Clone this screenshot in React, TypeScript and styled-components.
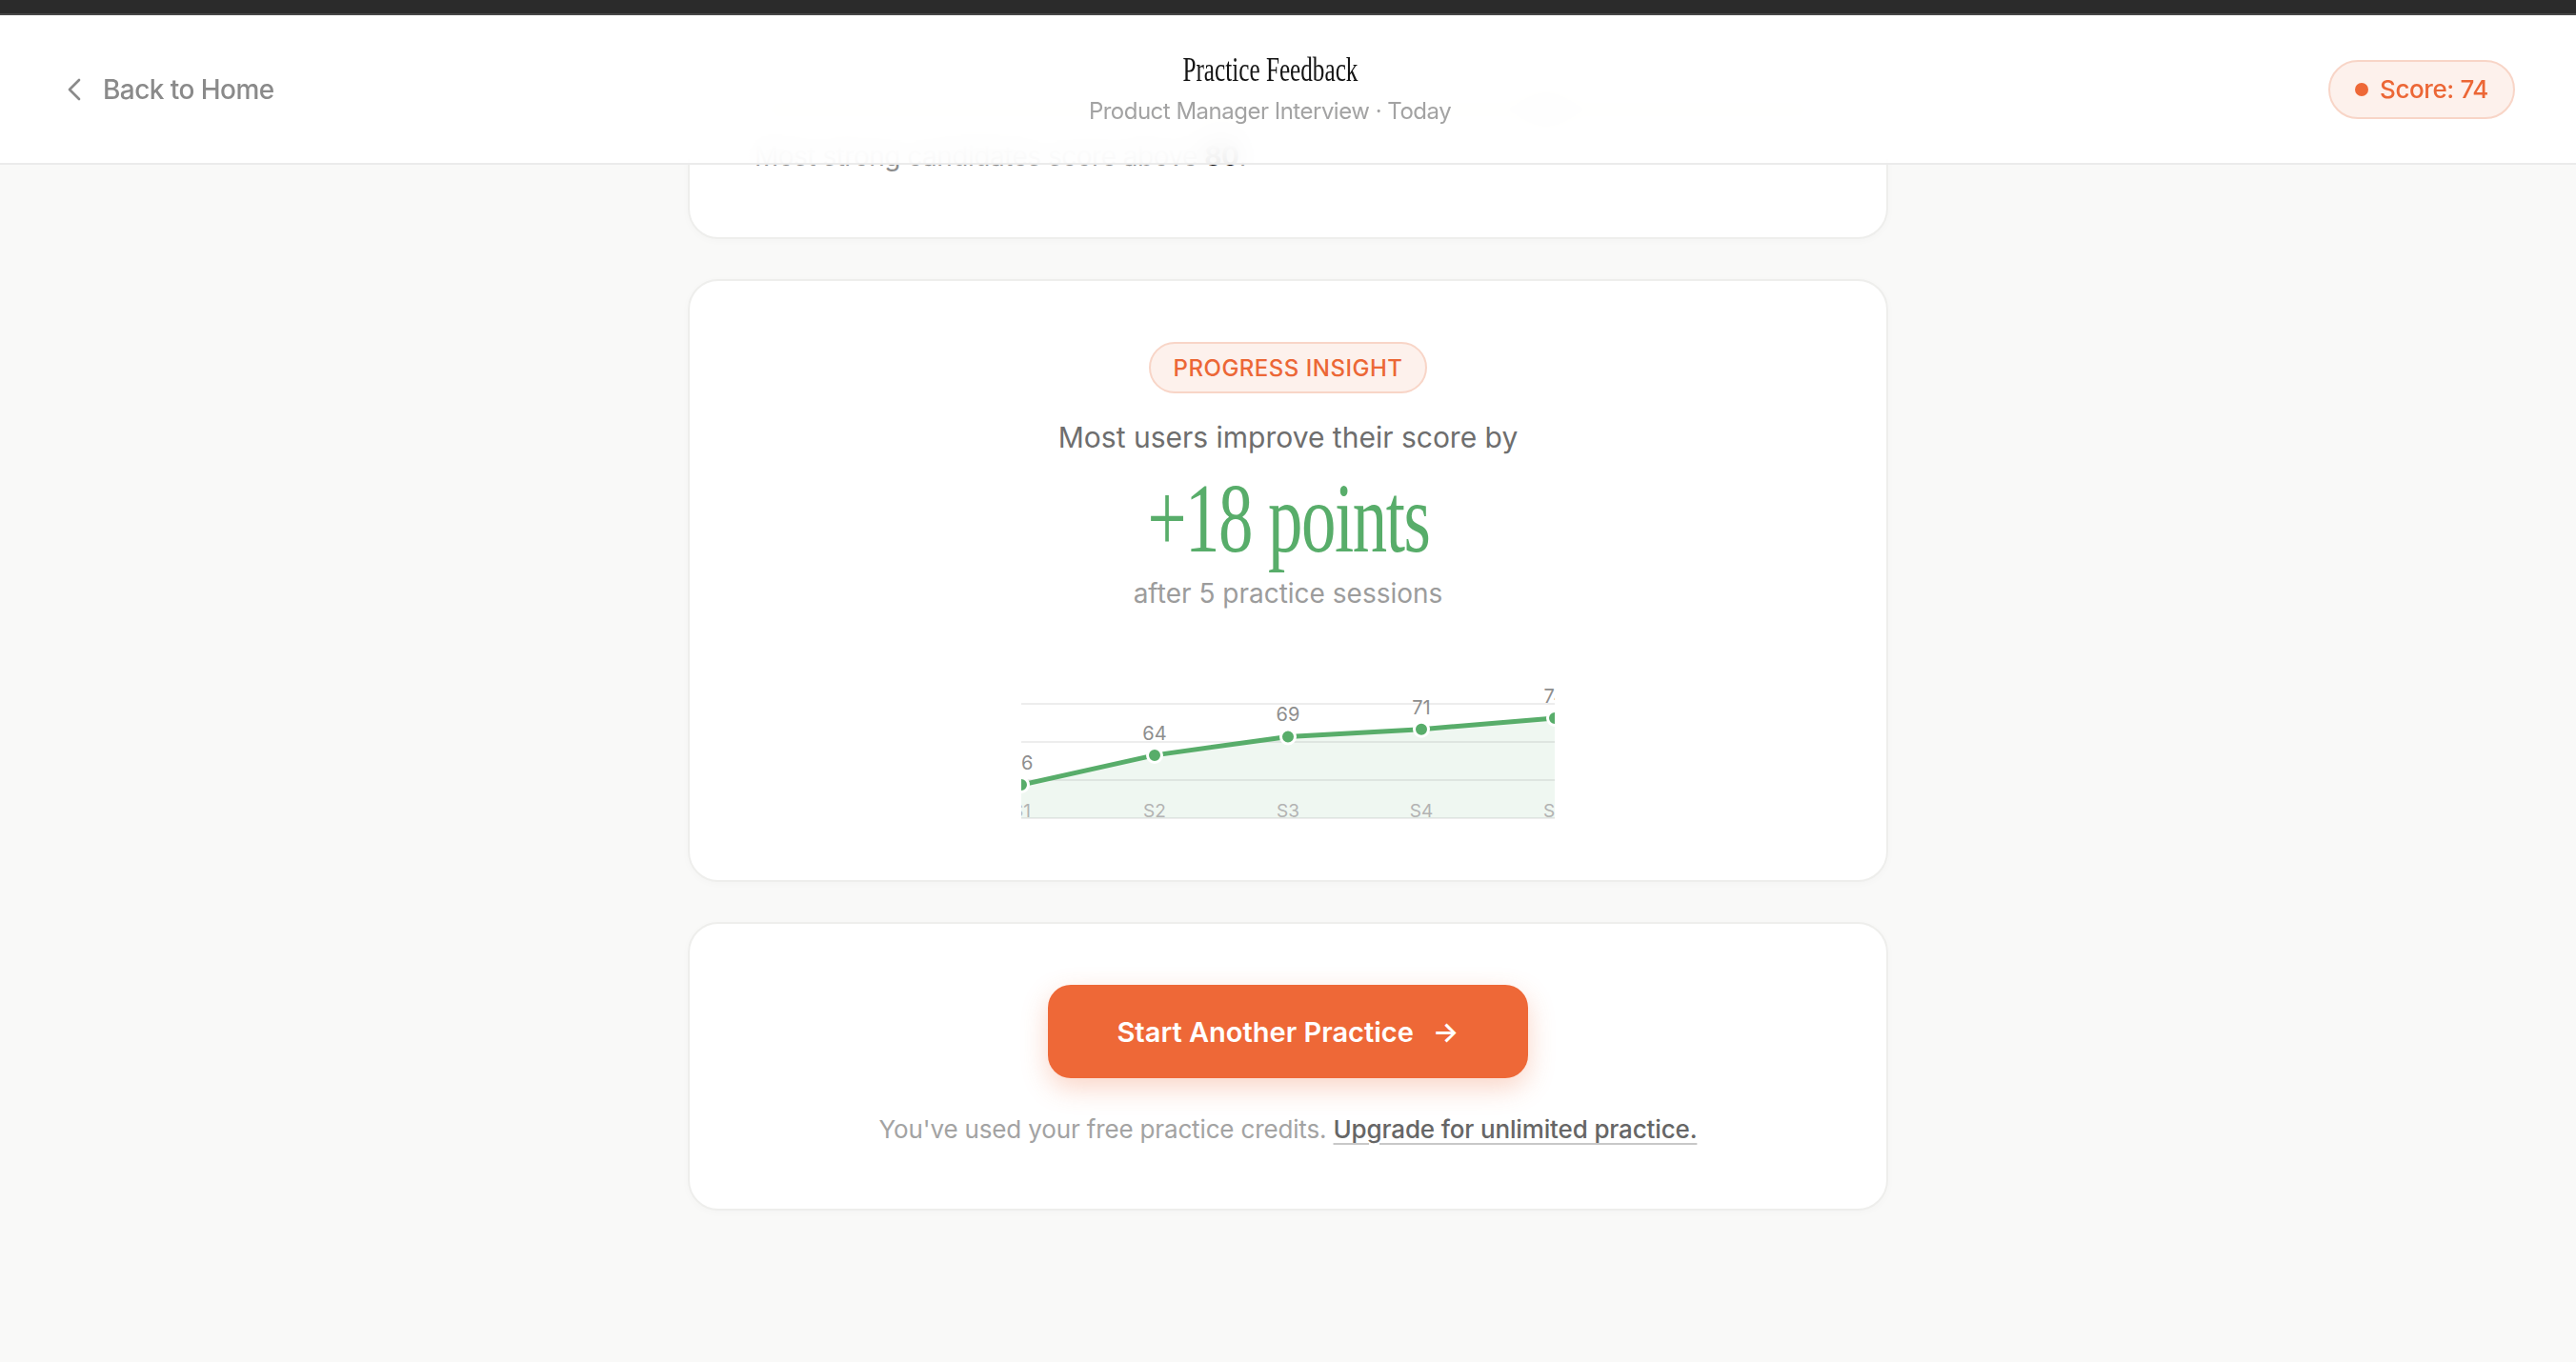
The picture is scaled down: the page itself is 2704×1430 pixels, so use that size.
import React from 'react';
import styled, { createGlobalStyle } from 'styled-components';
import { ChevronLeft } from 'lucide-react';

const GlobalStyle = createGlobalStyle`
  * {
    box-sizing: border-box;
  }

  body {
    margin: 0;
    background: #f9f9f8;
    font-family: Inter, "Noto Sans", sans-serif;
    -webkit-font-smoothing: antialiased;
  }
`;

const ORANGE = '#ee6837';
const GREEN = '#58ad6a';

const Shell = styled.div`
  min-height: 100vh;
  background: #f9f9f8;
`;

const TopStrip = styled.div`
  height: 16px;
  background: #2b2b2b;
  border-bottom: 2px solid #474747;
`;

const Header = styled.header`
  position: fixed;
  top: 16px;
  left: 0;
  right: 0;
  z-index: 10;
  height: 157px;
  display: grid;
  grid-template-columns: 1fr auto 1fr;
  align-items: center;
  padding: 0 64px;
  background: rgba(255, 255, 255, 0.9);
  backdrop-filter: blur(14px);
  border-bottom: 2px solid #ebebeb;
`;

const BackLink = styled.button`
  justify-self: start;
  display: inline-flex;
  align-items: center;
  gap: 10px;
  margin-left: -6px;
  padding: 0;
  border: 0;
  background: none;
  color: #8a8a8a;
  font-family: Inter, sans-serif;
  font-size: 28px;
  font-weight: 500;
  letter-spacing: -0.55px;
  cursor: pointer;
`;

const TitleBlock = styled.div`
  display: flex;
  flex-direction: column;
  align-items: center;
  gap: 3px;
  margin-right: 38px;
`;

const Title = styled.h1`
  margin: 0;
  font-family: "Liberation Serif", serif;
  font-weight: 400;
  font-size: 36px;
  line-height: 1.2;
  color: #141414;
  white-space: nowrap;
  transform: scaleX(0.7);
`;

const Subtitle = styled.div`
  font-size: 24px;
  line-height: 1.5;
  letter-spacing: -0.5px;
  color: #a3a3a3;
  white-space: nowrap;
`;

const SoftPill = styled.span`
  display: inline-flex;
  align-items: center;
  border: 2px solid #f8d5c7;
  background: #fdf1ec;
  border-radius: 999px;
  color: #ec6736;
  font-weight: 500;
  white-space: nowrap;
`;

const ScorePill = styled(SoftPill)`
  justify-self: end;
  gap: 12px;
  height: 62px;
  padding: 0 26px;
  font-size: 26px;
  letter-spacing: -0.4px;
`;

const Dot = styled.span`
  width: 14px;
  height: 14px;
  border-radius: 50%;
  background: ${ORANGE};
`;

const Main = styled.main`
  display: flex;
  flex-direction: column;
  align-items: center;
  gap: 42px;
  padding: 21px 0 80px;
`;

const Card = styled.section<{ $align?: 'start' | 'center' }>`
  width: 1260px;
  display: flex;
  flex-direction: column;
  align-items: ${p => (p.$align === 'start' ? 'flex-start' : 'center')};
  padding: 64px;
  background: #fff;
  border: 2px solid #eeeeec;
  border-radius: 32px;
  box-shadow: 0 2px 8px rgba(0, 0, 0, 0.025);
`;

const BenchTrack = styled.div`
  position: relative;
  width: 100%;
  height: 24px;
  margin-bottom: 16px;
  border-radius: 12px;
  background: #f2f2f0;
`;

const BenchMarker = styled.span<{ $at: number }>`
  position: absolute;
  top: -6px;
  left: ${p => p.$at}%;
  width: 36px;
  height: 36px;
  margin-left: -18px;
  border-radius: 50%;
  background: #e9e9e7;
`;

const BenchNote = styled.p`
  margin: 0 0 0 4px;
  font-size: 28px;
  line-height: 1.5;
  letter-spacing: -0.5px;
  color: #8c8c8c;

  b {
    color: #111;
    font-weight: 700;
  }
`;

const Tag = styled(SoftPill)`
  height: 54px;
  padding: 0 24px;
  font-size: 24px;
  letter-spacing: 0.5px;
`;

const Lead = styled.p`
  margin: 24px 0 0;
  font-size: 30px;
  line-height: 1.5;
  color: #6e6e6e;
`;

const BigStat = styled.div`
  margin-top: 10px;
  font-family: "Liberation Serif", serif;
  font-size: 104px;
  line-height: 1;
  letter-spacing: -2px;
  color: ${GREEN};
  white-space: nowrap;
  transform: scaleX(0.7);
`;

const After = styled.p`
  margin: 6px 0 0;
  font-size: 28px;
  line-height: 1.5;
  color: #9c9c9c;
`;

const ChartBox = styled.div`
  margin-top: 56px;
  width: 560px;
  height: 160px;

  svg {
    display: block;
    font-family: Inter, sans-serif;
  }
`;

const CtaButton = styled.button`
  display: inline-flex;
  align-items: center;
  gap: 20px;
  height: 98px;
  padding: 0 72px;
  border: 0;
  border-radius: 24px;
  background: ${ORANGE};
  color: #fff;
  font-family: Inter, sans-serif;
  font-size: 29px;
  font-weight: 600;
  box-shadow: 0 10px 28px rgba(238, 104, 55, 0.28);
  cursor: pointer;
`;

const Footnote = styled.p`
  margin: 34px 0 0;
  font-size: 26px;
  line-height: 1.5;
  letter-spacing: -0.15px;
  color: #a3a3a3;

  a {
    color: #666;
    font-weight: 500;
    text-decoration: underline;
    text-decoration-color: #c8c8c8;
    text-decoration-thickness: 2px;
    text-underline-offset: 5px;
  }
`;

const sessions = [56, 64, 69, 71, 74];
const CHART_W = 560;
const STEP = 140;
const px = (i: number) => i * STEP;
const py = (v: number) => 124 - (v - 56) * 3.889;

const ProgressChart: React.FC = () => {
  const pts = sessions.map((v, i) => `${px(i)},${py(v)}`);
  const area = `M${pts.join(' L')} L${CHART_W},159 L0,159 Z`;
  return (
    <ChartBox>
      <svg width={CHART_W} height={160} viewBox={`0 0 ${CHART_W} 160`}>
        <path d={area} fill="#eff7f1" />
        {[39, 79, 119, 159].map(y => (
          <line key={y} x1={0} x2={CHART_W} y1={y} y2={y} stroke="rgba(0,0,0,0.07)" strokeWidth={2} />
        ))}
        <polyline
          points={pts.join(' ')}
          fill="none"
          stroke={GREEN}
          strokeWidth={5}
          strokeLinejoin="round"
          strokeLinecap="round"
        />
        {sessions.map((v, i) => (
          <g key={i}>
            <circle cx={px(i)} cy={py(v)} r={7.5} fill={GREEN} stroke="#fff" strokeWidth={3} />
            <text x={px(i)} y={py(v) - 16} textAnchor="middle" fontSize={20} fill="#8e8e8e">
              {v}
            </text>
            <text x={px(i)} y={158} textAnchor="middle" fontSize={19} fill="#b3b3b3">
              S{i + 1}
            </text>
          </g>
        ))}
      </svg>
    </ChartBox>
  );
};

const App: React.FC = () => {
  return (
    <Shell>
      <GlobalStyle />
      <TopStrip />
      <Header>
        <BackLink>
          <ChevronLeft size={40} strokeWidth={1.6} />
          Back to Home
        </BackLink>
        <TitleBlock>
          <Title>Practice Feedback</Title>
          <Subtitle>Product Manager Interview · Today</Subtitle>
        </TitleBlock>
        <ScorePill>
          <Dot />
          Score: 74
        </ScorePill>
      </Header>

      <Main>
        <Card $align="start">
          <BenchTrack>
            <BenchMarker $at={74} />
          </BenchTrack>
          <BenchNote>
            Most strong candidates score above <b>80</b>.
          </BenchNote>
        </Card>

        <Card>
          <Tag>PROGRESS INSIGHT</Tag>
          <Lead>Most users improve their score by</Lead>
          <BigStat>+18 points</BigStat>
          <After>after 5 practice sessions</After>
          <ProgressChart />
        </Card>

        <Card>
          <CtaButton>
            Start Another Practice
            <span>→</span>
          </CtaButton>
          <Footnote>
            You've used your free practice credits. <a href="#">Upgrade for unlimited practice.</a>
          </Footnote>
        </Card>
      </Main>
    </Shell>
  );
};

export default App;
